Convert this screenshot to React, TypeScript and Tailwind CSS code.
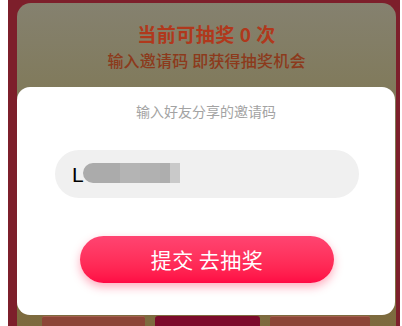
import React from "react";

const font = { fontFamily: '"Noto Sans CJK SC", "Noto Sans", sans-serif' };

function BackgroundPage() {
  return (
    <div className="h-full pl-[8px] pr-[2px] bg-white">
      <div className="h-full bg-[#7d1f2b] pt-[3px] pl-[9px] pr-[4px]">
        <div className="h-full rounded-t-[14px] bg-gradient-to-b from-[#85816f] via-[#7d7449] to-[#7d6a3e] flex flex-col items-center">
          <div className="mt-[18px] text-[19px] leading-[26px] font-bold text-[#b0381c] tracking-[0.5px]">
            当前可抽奖 0 次
          </div>
          <div className="mt-[2px] text-[16px] leading-[22px] font-medium text-[#8c3a1c] tracking-[0.2px]">
            输入邀请码 即获得抽奖机会
          </div>
          <div className="mt-auto w-full flex pl-[25px] pr-[24px] gap-[10px] h-[10px]">
            <div className="w-[103px] bg-[#8c4537] border-t border-[#a35f4e] rounded-t-[2px]" />
            <div className="w-[105px] bg-[#7c0b2b] rounded-t-[3px]" />
            <div className="w-[100px] bg-[#8c4537] border-t border-[#a35f4e] rounded-t-[2px]" />
          </div>
        </div>
      </div>
    </div>
  );
}

function InviteModal() {
  return (
    <div className="absolute left-[17px] top-[87px] w-[378px] h-[228px] bg-white rounded-[13px] flex flex-col items-center">
      <div className="mt-[14px] text-[14px] leading-[20px] text-[#a3a3a3]">输入好友分享的邀请码</div>
      <div className="mt-[29px] w-[304px] h-[48px] ml-[2px] rounded-full bg-[#f0f0f0] flex items-center pl-[17px]">
        <span className="text-[21px] leading-none text-black" style={{ fontFamily: '"Liberation Sans", sans-serif' }}>
          L
        </span>
        <div className="flex h-[20px] -ml-[1px] mt-[-2px]">
          <div className="w-[37px] bg-[#ababab] rounded-l-full" />
          <div className="w-[20px] bg-[#b4b4b4]" />
          <div className="w-[20px] bg-[#b1b1b1]" />
          <div className="w-[10px] bg-[#aeaeae]" />
          <div className="w-[10px] bg-[#c9c9c9]" />
        </div>
      </div>
      <button className="mt-[38px] ml-[2px] w-[254px] h-[47px] rounded-full bg-gradient-to-b from-[#ff4471] to-[#ff0844] text-white text-[21px] leading-none shadow-[0_4px_10px_rgba(255,20,70,0.35)] tracking-[0.5px]">
        提交 去抽奖
      </button>
    </div>
  );
}

export default function App() {
  return (
    <div className="relative w-[402px] h-[326px] overflow-hidden" style={font}>
      <BackgroundPage />
      <InviteModal />
    </div>
  );
}
